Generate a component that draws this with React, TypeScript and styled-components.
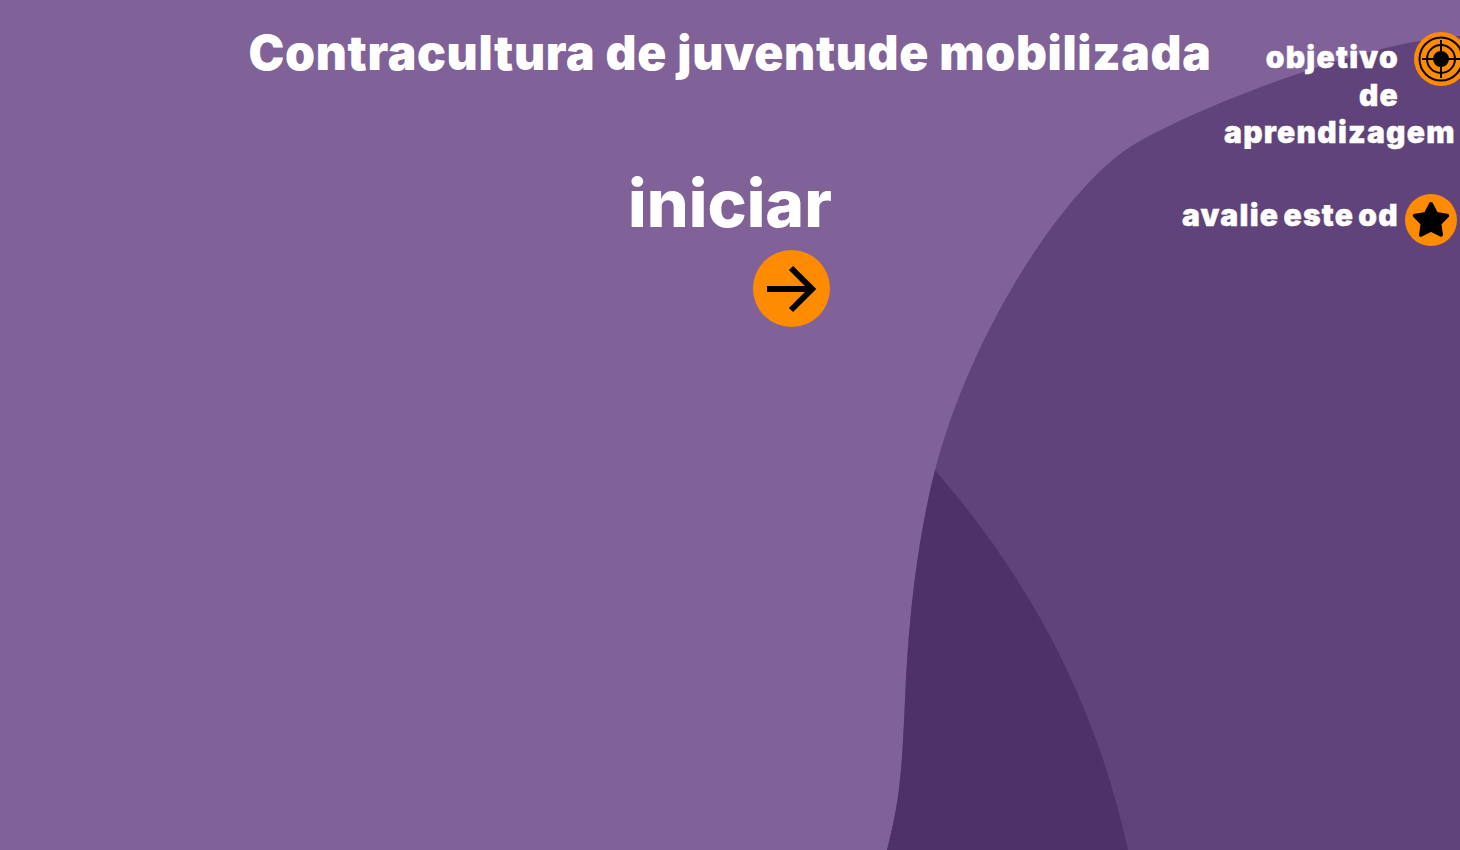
import React from "react";
import styled, { createGlobalStyle } from "styled-components";

const Global = createGlobalStyle`
  html, body { margin: 0; padding: 0; height: 100%; overflow: hidden; background: #806299; }
  #root { height: 100%; }
`;

const Page = styled.div`
  position: relative;
  width: 1460px;
  height: 850px;
  overflow: hidden;
  background: #806299;
  color: #fff;
  font-family: Inter, "Noto Sans", sans-serif;
`;

const Backdrop = styled.svg`
  position: absolute;
  inset: 0;
  width: 1460px;
  height: 850px;
`;

const Stage = styled.div`
  position: relative;
  display: grid;
  width: 1460px;
  height: 850px;
`;

const Main = styled.main`
  grid-area: 1 / 1;
  display: flex;
  flex-direction: column;
  align-items: center;
  padding-top: 21px;
`;

const Title = styled.h1`
  margin: 0;
  font-size: 48px;
  line-height: 64px;
  font-weight: 900;
  letter-spacing: 0.68px;
  white-space: nowrap;
`;

const Start = styled.div`
  display: flex;
  flex-direction: column;
  align-items: flex-end;
  margin-top: 73px;
`;

const StartLabel = styled.div`
  font-size: 66px;
  line-height: 90px;
  font-weight: 800;
`;

const Circle = styled.button<{ $size: number }>`
  flex: none;
  display: flex;
  align-items: center;
  justify-content: center;
  width: ${(p) => p.$size}px;
  height: ${(p) => p.$size}px;
  padding: 0;
  border: 0;
  border-radius: 50%;
  background: #ff8c00;
`;

const ArrowButton = styled(Circle)`
  margin-top: 2px;
  margin-right: 2px;
`;

const Side = styled.aside`
  grid-area: 1 / 1;
  justify-self: start;
  margin-left: 1183px;
  display: flex;
  flex-direction: column;
  width: 277px;
  padding-top: 32px;
`;

const SideRow = styled.div<{ $gap: number; $top: number }>`
  display: flex;
  justify-content: flex-end;
  align-items: flex-start;
  margin-top: ${(p) => p.$top}px;
  gap: ${(p) => p.$gap}px;
`;

const SideText = styled.div<{ $width: number; $pad: number }>`
  width: ${(p) => p.$width}px;
  flex: none;
  padding-top: ${(p) => p.$pad}px;
  text-align: right;
  font-size: 30px;
  line-height: 37.5px;
  font-weight: 900;
  letter-spacing: 1.25px;
  word-spacing: -3px;
  -webkit-text-stroke: 0.4px #fff;
`;

const TargetRow = styled(SideRow)`
  margin-right: -8px;
`;

const StarRow = styled(SideRow)`
  margin-right: 3px;
`;

export default function App() {
  return (
    <Page>
      <Global />
      <Backdrop viewBox="0 0 1460 850" aria-hidden="true">
        <path
          d="M1460 36 C1370 40 1190 109 1130 147 C1070 185 975 320 935 470 C915 550 908 630 905 700 C902 770 900 800 887 850 L1460 850 Z"
          fill="#60437a"
        />
        <path
          d="M935 470 C1030 580 1095 700 1128 850 L887 850 C900 800 902 770 905 700 C908 630 915 550 935 470 Z"
          fill="#4f316a"
        />
      </Backdrop>
      <Stage>
        <Main>
          <Title>Contracultura de juventude mobilizada</Title>
          <Start>
            <StartLabel>iniciar</StartLabel>
            <ArrowButton $size={77} aria-label="iniciar">
              <svg width="50" height="50" viewBox="0 0 50 50" fill="none" stroke="#000" strokeWidth="6">
                <path d="M1 25 H45" />
                <path d="M25 4 L46 25 L25 46" />
              </svg>
            </ArrowButton>
          </Start>
        </Main>
        <Side>
          <TargetRow $gap={15} $top={0}>
            <SideText $width={175} $pad={7}>objetivo de aprendizagem</SideText>
            <Circle as="div" $size={54}>
              <svg width="46" height="46" viewBox="0 0 46 46" fill="none" stroke="#000" strokeWidth="2">
                <circle cx="23" cy="23" r="21.5" />
                <circle cx="23" cy="23" r="14" />
                <circle cx="23" cy="23" r="7" fill="#000" />
                <path d="M23 4 V42 M4 23 H42" />
              </svg>
            </Circle>
          </TargetRow>
          <StarRow $gap={6} $top={42}>
            <SideText $width={220} $pad={3}>avalie este od</SideText>
            <Circle as="div" $size={52}>
              <svg width="40" height="40" viewBox="0 0 40 40" fill="#000" stroke="#000" strokeWidth="4" strokeLinejoin="round">
                <path d="M20 4 L25.2 13.9 L36.2 15.7 L28.4 23.7 L30 34.8 L20 29.8 L10 34.8 L11.6 23.7 L3.8 15.7 L14.8 13.9 Z" />
              </svg>
            </Circle>
          </StarRow>
        </Side>
      </Stage>
    </Page>
  );
}
